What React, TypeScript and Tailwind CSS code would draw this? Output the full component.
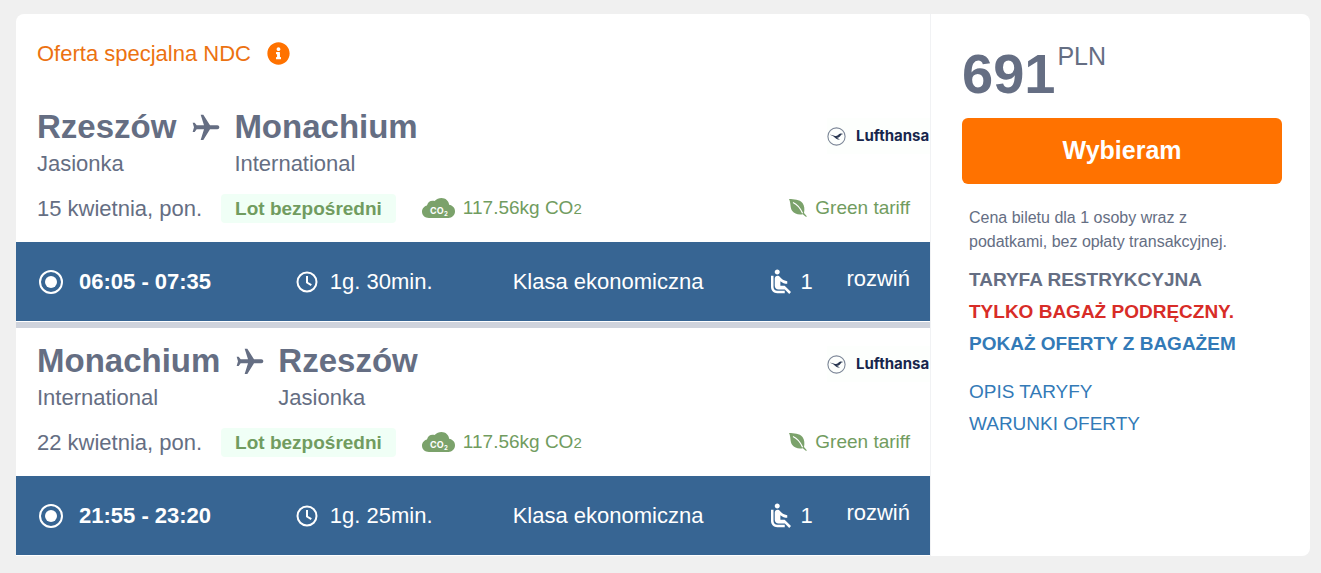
import React from 'react';
import { FaInfoCircle } from 'react-icons/fa';
import { MdAirlineSeatReclineNormal, MdFlight } from 'react-icons/md';

type Leg = {
  id: string;
  from: string;
  fromAirport: string;
  to: string;
  toAirport: string;
  date: string;
  hours: string;
  duration: string;
};

const legs: Leg[] = [
  {
    id: 'outbound',
    from: 'Rzeszów',
    fromAirport: 'Jasionka',
    to: 'Monachium',
    toAirport: 'International',
    date: '15 kwietnia, pon.',
    hours: '06:05 - 07:35',
    duration: '1g. 30min.',
  },
  {
    id: 'inbound',
    from: 'Monachium',
    fromAirport: 'International',
    to: 'Rzeszów',
    toAirport: 'Jasionka',
    date: '22 kwietnia, pon.',
    hours: '21:55 - 23:20',
    duration: '1g. 25min.',
  },
];

const CloudIcon = () => (
  <svg width="33" height="20" viewBox="0 0 33 20" className="shrink-0">
    <path
      d="M7 20C3 20 0 17.500 0 13.800 0 10.500 2.300 8.200 5 7.500 5.500 4 9 1.800 12.600 3 14.500 1 17 0 19.500 0c4 0 7.300 2.800 7.600 6.800C30.500 7.300 33 9.900 33 13.300 33 17.200 30 20 26.500 20Z"
      fill="#7ba26b"
    />
    <text x="8" y="16" fill="#fff" fontSize="9" fontWeight="700" fontFamily="Inter, sans-serif">
      CO
    </text>
    <text x="22" y="18" fill="#fff" fontSize="6" fontWeight="700" fontFamily="Inter, sans-serif">
      2
    </text>
  </svg>
);

const LeafIcon = () => (
  <svg width="18" height="18" viewBox="0 0 18 18" className="shrink-0">
    <path
      d="M0 0C5 .3 10.500.2 13.500 4c2 2.600 2.300 6.500 1.500 10l2.800 3.200-.7.700-3.300-2.700C9.500 16 5.500 15 3.300 12 .8 8.500 2 3.800 0 0Z"
      fill="#7ba26b"
    />
    <path d="M4 3.500C8.500 5.500 11.500 9.500 13.600 14.300" fill="none" stroke="#fff" strokeWidth="1.200" />
  </svg>
);

const ClockIcon = () => (
  <svg width="22" height="22" viewBox="0 0 22 22" fill="none" stroke="#fff" strokeWidth="2" className="shrink-0">
    <circle cx="11" cy="11" r="9.500" />
    <path d="M11 5v6.500l4.300 2.700" />
  </svg>
);

const AirlineLogo = () => (
  <div className="flex h-9 w-[103px] shrink-0 items-center gap-2.5 overflow-hidden bg-[#fdfffd]">
    <svg width="19" height="19" viewBox="0 0 19 19" className="shrink-0">
      <circle cx="9.500" cy="9.500" r="8.600" fill="none" stroke="#7d8798" strokeWidth="1.100" />
      <path
        d="M2.800 7.800c2.200-.3 3.700.9 5.500 1.200C10.500 9.300 11.500 7 13.500 6.500c1-.2 1.900.1 2.800.5-1.300.1-2.100.6-2.600 1.400-1 1.500-2.300 2.300-4 2.300l3.300 1.800c-2.700.1-4-.9-5.300-2.100C6.300 9.200 4.800 8.300 2.800 7.800Z"
        fill="#2b3852"
      />
    </svg>
    <span className="font-[Inter,sans-serif] text-[15px] font-bold text-[#17264c]">Lufthansa</span>
  </div>
);

const LegSection: React.FC<{ leg: Leg }> = ({ leg }) => (
  <section>
    <div className="pt-3 pb-[17px] pl-[21px]">
      <div className="flex items-start justify-between">
        <div className="flex">
          <div>
            <h2 className="text-[33px] leading-[42px] font-bold">{leg.from}</h2>
            <p className="text-[22px] leading-8">{leg.fromAirport}</p>
          </div>
          <MdFlight size={32} className="mr-3 ml-3.5 mt-1.5 rotate-90" />
          <div>
            <h2 className="text-[33px] leading-[42px] font-bold">{leg.to}</h2>
            <p className="text-[22px] leading-8">{leg.toAirport}</p>
          </div>
        </div>
        <div className={leg.id === 'outbound' ? 'pt-3' : 'pt-1.5'}>
          <AirlineLogo />
        </div>
      </div>
      <div className="mt-[11px] flex h-[34px] items-center pr-5">
        <span className="text-[22px]">{leg.date}</span>
        <span className="ml-[19px] rounded bg-[#f0fff6] px-3.5 text-[19px] leading-[29px] font-bold text-[#719c60]">
          Lot bezpośredni
        </span>
        <span className="ml-[26px] flex items-center gap-2 text-[19px] text-[#719c60]">
          <CloudIcon />
          <span>
            117.56kg CO<span className="text-[15px]">2</span>
          </span>
        </span>
        <span className="ml-auto flex items-center gap-2 text-[19px] text-[#719c60]">
          <LeafIcon />
          Green tariff
        </span>
      </div>
    </div>

    <div className="grid h-[79px] grid-cols-[257fr_217fr_256fr_78fr_62fr] items-center bg-[#376593] pr-5 pl-[23px] text-[22px] whitespace-nowrap text-white">
      <label className="flex items-center gap-4 font-bold">
        <input
          type="radio"
          name={leg.id}
          defaultChecked
          className="size-6 appearance-none rounded-full border-2 border-white bg-clip-content p-1 checked:bg-white"
        />
        {leg.hours}
      </label>
      <span className="flex items-center gap-3">
        <ClockIcon />
        {leg.duration}
      </span>
      <span>Klasa ekonomiczna</span>
      <span className="flex items-center gap-1">
        <MdAirlineSeatReclineNormal size={30} className="-ml-0.5" />1
      </span>
      <button type="button" className="pb-1.5">
        rozwiń
      </button>
    </div>
  </section>
);

export default function App() {
  return (
    <main className="min-h-screen bg-[#f0f0f0] pt-3.5 pr-[11px] pb-4 pl-4 font-['Liberation_Sans',Arial,sans-serif] text-[#656e83]">
      <article className="flex overflow-hidden rounded-t-lg rounded-br-lg bg-white">
        <div className="min-w-0 flex-1 pb-px">
          <div className="flex h-20 items-center gap-4 pb-0.5 pl-[21px] text-[22px] text-[#ec7211]">
            Oferta specjalna NDC
            <FaInfoCircle size={23} color="#ff7200" />
          </div>
          <LegSection leg={legs[0]} />
          <div className="mt-px h-1.5 bg-[#cfd3dc]" />
          <LegSection leg={legs[1]} />
        </div>

        {/* Price and fare rules */}
        <aside className="w-[380px] shrink-0 border-l border-[#f1f2f4] pt-7 pr-7 pb-6 pl-[31px]">
          <div className="flex items-start gap-0.5">
            <span className="text-[56px] leading-[64px] font-bold">691</span>
            <span className="text-[25px] leading-7">PLN</span>
          </div>
          <button type="button" className="mt-3 h-[66px] w-full rounded-md bg-[#ff7200] text-[25px] font-bold text-white">
            Wybieram
          </button>
          <div className="pl-[7px]">
            <p className="mt-[22px] max-w-[280px] text-base">
              Cena biletu dla 1 osoby wraz z podatkami, bez opłaty transakcyjnej.
            </p>
            <div className="mt-2.5 flex flex-col items-start text-[19px] leading-8 font-bold whitespace-nowrap">
              <span>TARYFA RESTRYKCYJNA</span>
              <span className="text-[#d82c27]">TYLKO BAGAŻ PODRĘCZNY.</span>
              <a href="#bagaz" className="text-[#337ab7]">POKAŻ OFERTY Z BAGAŻEM</a>
            </div>
            <div className="mt-4 flex flex-col items-start text-[19px] leading-8 text-[#337ab7]">
              <a href="#opis">OPIS TARYFY</a>
              <a href="#warunki">WARUNKI OFERTY</a>
            </div>
          </div>
        </aside>
      </article>
    </main>
  );
}
